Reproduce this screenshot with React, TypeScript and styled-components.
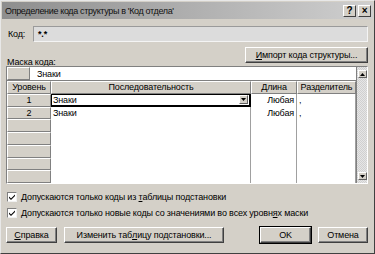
import styled, { createGlobalStyle } from 'styled-components'

const GlobalStyle = createGlobalStyle`
  html, body {
    margin: 0;
    padding: 0;
    background: #d4d0c8;
  }
  * {
    box-sizing: border-box;
  }
`

const levels = [
  { level: '1', sequence: 'Знаки', length: 'Любая', separator: ',', active: true },
  { level: '2', sequence: 'Знаки', length: 'Любая', separator: ',', active: false },
]

const emptyRows = 5

const CheckIcon = () => (
  <svg width="8" height="8" viewBox="0 0 8 8">
    <path d="M1 3.5 L3 5.5 L7 1.5 L7 3 L3 7 L1 5 Z" fill="#000" />
  </svg>
)

const ArrowDown = () => (
  <svg width="5" height="3" viewBox="0 0 5 3">
    <path d="M0 0 H5 L2.5 3 Z" fill="#000" />
  </svg>
)

const ArrowUp = () => (
  <svg width="5" height="3" viewBox="0 0 5 3">
    <path d="M0 3 H5 L2.5 0 Z" fill="#000" />
  </svg>
)

const App = () => {
  return (
    <>
      <GlobalStyle />
      <Window>
        <TitleBar>
          <TitleText>Определение кода структуры в 'Код отдела'</TitleText>
          <TitleButtons>
            <TitleButton>?</TitleButton>
            <TitleButton>×</TitleButton>
          </TitleButtons>
        </TitleBar>
        <Body>
          <CodeRow>
            <Label>Код:</Label>
            <CodeField>*.*</CodeField>
          </CodeRow>
          <ImportRow>
            <Button $width={123}>
              <u>И</u>мпорт кода структуры...
            </Button>
          </ImportRow>
          <MaskLabel>
            <u>М</u>аска кода:
          </MaskLabel>
          <GridFrame>
            <Table>
              <MaskRow>
                <MaskCorner />
                <MaskValue>Знаки</MaskValue>
              </MaskRow>
              <Row>
                <HeaderCell>Уровень</HeaderCell>
                <HeaderCell>Последовательность</HeaderCell>
                <HeaderCell>Длина</HeaderCell>
                <HeaderCell>Разделитель</HeaderCell>
              </Row>
              {levels.map((item) => (
                <Row key={item.level}>
                  <RowHead>{item.level}</RowHead>
                  {item.active ? (
                    <EditCell>
                      <span>{item.sequence}</span>
                      <DropButton>
                        <ArrowDown />
                      </DropButton>
                    </EditCell>
                  ) : (
                    <DataCell>{item.sequence}</DataCell>
                  )}
                  <DataCell $align="right">{item.length}</DataCell>
                  <DataCell>{item.separator}</DataCell>
                </Row>
              ))}
              {Array.from({ length: emptyRows }).map((_, i) => (
                <Row key={i}>
                  <RowHead />
                  <DataCell />
                  <DataCell />
                  <DataCell />
                </Row>
              ))}
            </Table>
            <ScrollBar>
              <ScrollButton>
                <ArrowUp />
              </ScrollButton>
              <ScrollTrack />
              <ScrollButton>
                <ArrowDown />
              </ScrollButton>
            </ScrollBar>
          </GridFrame>
          <Checks>
            <CheckRow>
              <CheckBox>
                <CheckIcon />
              </CheckBox>
              <span>
                Допускаются только коды из <u>т</u>аблицы подстановки
              </span>
            </CheckRow>
            <CheckRow>
              <CheckBox>
                <CheckIcon />
              </CheckBox>
              <span>
                Допускаются только новые коды со значениями во всех уровн<u>я</u>х маски
              </span>
            </CheckRow>
          </Checks>
          <ButtonRow>
            <Button $width={51}>
              <u>С</u>правка
            </Button>
            <Button $width={160}>
              Изменить таб<u>л</u>ицу подстановки...
            </Button>
            <Spacer />
            <Button $width={51} $default>
              OK
            </Button>
            <Button $width={50}>Отмена</Button>
          </ButtonRow>
        </Body>
      </Window>
    </>
  )
}

export default App

const Window = styled.div`
  width: 375px;
  height: 254px;
  display: flex;
  flex-direction: column;
  background: #d4d0c8;
  border: 1px solid;
  border-color: #e8e8e8 #404040 #404040 #e8e8e8;
  font-family: 'Liberation Sans', Arial, sans-serif;
  font-size: 9px;
  letter-spacing: -0.15px;
  color: #000;
  overflow: hidden;
`

const TitleBar = styled.div`
  height: 17px;
  margin: 1px 1px 0;
  display: flex;
  align-items: center;
  justify-content: space-between;
  padding: 0 2px 0 3px;
  background: linear-gradient(to right, #8e8e8e, #cfcfcf);
`

const TitleText = styled.div`
  font-size: 9px;
  letter-spacing: -0.35px;
  color: #111;
  white-space: nowrap;
`

const TitleButtons = styled.div`
  display: flex;
  gap: 2px;
`

const TitleButton = styled.div`
  width: 13px;
  height: 12px;
  display: flex;
  align-items: center;
  justify-content: center;
  background: #d4d0c8;
  border: 1px solid;
  border-color: #fff #404040 #404040 #fff;
  font-size: 10px;
  font-weight: bold;
  line-height: 1;
`

const Body = styled.div`
  display: flex;
  flex-direction: column;
  padding: 7px 6px 0 5px;
`

const CodeRow = styled.div`
  display: flex;
  align-items: center;
  height: 16px;
`

const Label = styled.div`
  width: 27px;
  padding-left: 2px;
`

const CodeField = styled.div`
  flex: 1;
  height: 16px;
  padding: 2px 4px;
  background: #dcdcdc;
  border: 1px solid;
  border-color: #9a9a9a #f4f4f4 #f4f4f4 #9a9a9a;
  font-weight: bold;
`

const ImportRow = styled.div`
  display: flex;
  justify-content: flex-end;
  margin-top: 5px;
`

const Button = styled.div<{ $width: number; $default?: boolean }>`
  width: ${(p) => p.$width}px;
  height: 16px;
  display: flex;
  align-items: center;
  justify-content: center;
  white-space: nowrap;
  background: #d4d0c8;
  border: 1px solid;
  border-color: #fff #404040 #404040 #fff;
  box-shadow: ${(p) =>
    p.$default ? '0 0 0 1px #000, inset -1px -1px 0 #808080' : 'inset -1px -1px 0 #808080'};
`

const MaskLabel = styled.div`
  margin-top: -5px;
  padding-left: 1px;
  height: 8px;
  line-height: 8px;
`

const GridFrame = styled.div`
  display: flex;
  height: 118px;
  border: 1px solid;
  border-color: #808080 #fff #fff #808080;
  background: #fff;
`

const Table = styled.div`
  width: 349px;
  display: flex;
  flex-direction: column;
`

const MaskRow = styled.div`
  display: flex;
  height: 14px;
  border-bottom: 1px solid #808080;
`

const MaskCorner = styled.div`
  width: 23px;
  background: #d4d0c8;
  border: 1px solid;
  border-color: #fff #808080 #808080 #fff;
`

const MaskValue = styled.div`
  flex: 1;
  padding: 2px 7px;
  background: #fff;
`

const Row = styled.div`
  display: grid;
  grid-template-columns: 44px 200px 46px 59px;
  height: 13px;
`

const HeaderCell = styled.div`
  display: flex;
  align-items: center;
  justify-content: center;
  background: #d4d0c8;
  border: 1px solid;
  border-color: #fff #808080 #808080 #fff;
  white-space: nowrap;
  overflow: hidden;
`

const RowHead = styled(HeaderCell)``

const DataCell = styled.div<{ $align?: 'left' | 'right' }>`
  padding: 0 2px;
  line-height: 12px;
  text-align: ${(p) => p.$align ?? 'left'};
  border-right: 1px solid #a0a0a0;
  white-space: nowrap;
  overflow: hidden;
`

const EditCell = styled.div`
  display: flex;
  align-items: center;
  justify-content: space-between;
  padding: 0 1px;
  border: 1px solid #000;
  border-right-width: 2px;
  border-bottom-width: 2px;
`

const DropButton = styled.div`
  width: 9px;
  height: 9px;
  display: flex;
  align-items: center;
  justify-content: center;
  background: #d4d0c8;
  border: 1px solid;
  border-color: #fff #606060 #606060 #fff;
`

const ScrollBar = styled.div`
  flex: 1;
  display: flex;
  flex-direction: column;
  align-items: center;
  padding: 3px 0;
  border-left: 1px solid #808080;
  background: repeating-conic-gradient(#e6e6e6 0 25%, #d0d0d0 0 50%) 0 0 / 2px 2px;
`

const ScrollButton = styled.div`
  width: 9px;
  height: 8px;
  display: flex;
  align-items: center;
  justify-content: center;
  background: #d4d0c8;
  border: 1px solid;
  border-color: #fff #606060 #606060 #fff;
`

const ScrollTrack = styled.div`
  flex: 1;
`

const Checks = styled.div`
  display: flex;
  flex-direction: column;
  gap: 5px;
  margin-top: 7px;
`

const CheckRow = styled.div`
  display: flex;
  align-items: center;
  gap: 4px;
  padding-left: 1px;
  height: 11px;
  white-space: nowrap;
`

const CheckBox = styled.div`
  width: 10px;
  height: 10px;
  display: flex;
  align-items: center;
  justify-content: center;
  background: #fff;
  border: 1px solid;
  border-color: #808080 #f0f0f0 #f0f0f0 #808080;
`

const ButtonRow = styled.div`
  display: flex;
  align-items: center;
  gap: 7px;
  margin-top: 9px;
`

const Spacer = styled.div`
  flex: 1;
`
